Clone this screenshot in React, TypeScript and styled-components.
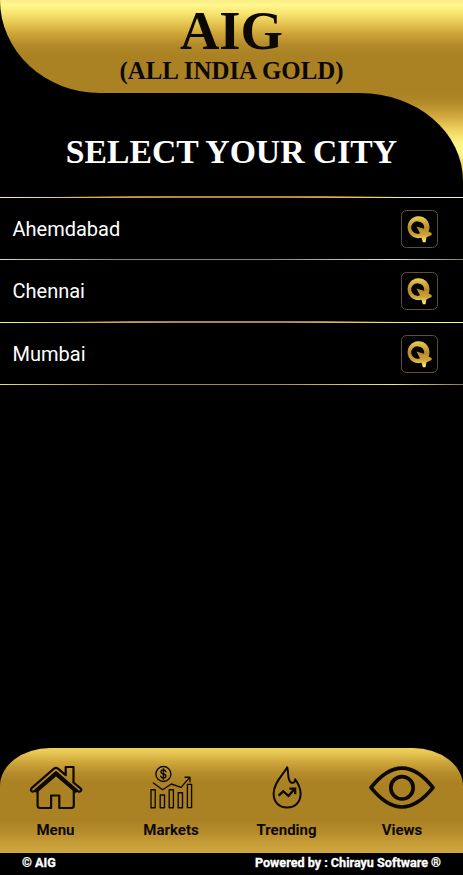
import React from "react";
import styled, { createGlobalStyle } from "styled-components";

const Global = createGlobalStyle`
  * { box-sizing: border-box; }
  body { margin: 0; background: #000; }
`;

const goldSheet =
  "linear-gradient(180deg, #fbee86 0px, #fff78c 5px, #f6e36c 14px, #e2c04c 25px, #cda437 34px, #b38a2a 45px, #ab8223 55px, #ab8223 94px, #b58c2b 104px, #d3aa40 117px, #edd35e 130px, #fff482 143px, #fff78c 152px, #efdc69 164px, #c9a038 186px)";

const Page = styled.div`
  min-height: 100vh;
  display: flex;
  flex-direction: column;
  background: #000;
  color: #fff;
  font-family: Roboto, sans-serif;
  overflow: hidden;
`;

const Header = styled.header`
  height: 93px;
  display: flex;
  flex-direction: column;
  align-items: center;
  background: ${goldSheet} 0 0 / 100% 186px no-repeat;
  border-bottom-left-radius: 100px 93px;
  color: #0c0804;
  font-family: "Liberation Serif", serif;
  font-weight: 700;
`;

const Brand = styled.div`
  font-size: 54.5px;
  line-height: 56px;
  height: 57px;
  padding-top: 3px;
`;

const Tagline = styled.div`
  font-size: 24.9px;
  line-height: 28px;
  white-space: nowrap;
`;

const TitleSheet = styled.div`
  height: 103px;
  background: ${goldSheet} 0 -93px / 100% 186px no-repeat;
`;

const TitlePanel = styled.div`
  height: 103px;
  display: flex;
  justify-content: center;
  background: #000;
  border-top-right-radius: 103px 88px;
`;

const Title = styled.h1`
  margin: 38px 0 0;
  font: 700 33.7px/42px "Liberation Serif", serif;
  white-space: nowrap;
`;

const ThickRule = styled.div<{ $mid: string }>`
  height: 2px;
  background:
    linear-gradient(90deg, transparent 60px, ${(p) => p.$mid} 135px, ${(p) => p.$mid} 325px, transparent 400px) 0 0 / 100% 1px no-repeat,
    linear-gradient(90deg, #fff68a 0, #d9b24e 20%, ${(p) => p.$mid} 40%, ${(p) => p.$mid} 60%, #e8cb5c 78%, #fff68a 88%, #fff68a 100%) 0 1px / 100% 1px no-repeat;
`;

const ThinRule = styled.div<{ $mid: string; $end: string }>`
  height: 1px;
  background: linear-gradient(90deg, #e6dc7c 0, ${(p) => p.$mid} 25%, ${(p) => p.$mid} 58%, #f4e987 85%, ${(p) => p.$end} 100%);
`;

const CityRow = styled.div`
  height: 61px;
  padding: 0 25px 0 12.5px;
  display: flex;
  align-items: center;
  justify-content: space-between;
  font-size: 20px;
`;

const CityName = styled.span`
  line-height: 24px;
`;

const BadgeSvg = styled.svg`
  width: 38px;
  height: 40px;
  display: block;
`;

const Nav = styled.nav`
  margin-top: auto;
  height: 105px;
  display: grid;
  grid-template-columns: repeat(4, 115.5px);
  border-radius: 50px 50px 0 0 / 38px 38px 0 0;
  background: linear-gradient(180deg, #efd35d 0, #e4c250 6px, #cca439 15px, #b58c2b 25px, #ab8223 35px, #ab8223 72px, #b48b2b 83px, #c59b36 94px, #d0a83f 105px);
`;

const NavItem = styled.a`
  display: flex;
  flex-direction: column;
  align-items: center;
  padding: 16px 4.5px 0 0;
  color: #0d0803;
  font-weight: 700;
  font-size: 15px;
  line-height: 18px;
`;

const NavIcon = styled.svg`
  display: block;
  height: 47px;
  margin-bottom: 10px;
  overflow: visible;
  fill: none;
  stroke: #0d0803;
  stroke-linecap: round;
  stroke-linejoin: round;
`;

const Footer = styled.footer`
  height: 22px;
  padding: 0 22px;
  display: flex;
  justify-content: space-between;
  font-size: 12.6px;
  font-weight: 700;
  line-height: 20px;
  -webkit-text-stroke: 0.3px #fff;
`;

function Badge({ id }: { id: string }) {
  return (
    <BadgeSvg viewBox="0 0 38 40">
      <defs>
        <linearGradient id={id} x1="0" y1="0" x2="0" y2="1">
          <stop offset="0" stopColor="#ecd052" />
          <stop offset="0.45" stopColor="#b88a28" />
          <stop offset="0.72" stopColor="#cfa337" />
          <stop offset="1" stopColor="#fff47c" />
        </linearGradient>
      </defs>
      <rect x="1.5" y="1.5" width="36" height="37" rx="5" fill="#000" stroke="#6a5b30" strokeWidth="0.9" />
      <path
        fill={`url(#${id})`}
        fillRule="evenodd"
        d="M18 7.2a10.9 11 0 1 0 3.4 21.6l1.5 4.4h2.6l1-5 5.1-2.3v-1.8l-3-1.5A11 11 0 0 0 18 7.2ZM18 12.4a6.2 6.2 0 0 1 6.1 7.3l-7.7-2.3 3.6 6.8A6.2 6.2 0 1 1 18 12.4Z"
      />
    </BadgeSvg>
  );
}

function HomeIcon() {
  return (
    <NavIcon width="54" viewBox="0 0 54 47" strokeWidth="2.2">
      <path d="M36.7 11.2V3h7.8v15.5l7.1 5.8c1.8 1.7-.6 4.5-2.8 2.8L27 8.2 5.4 27c-2.2 1.7-4.6-1-2.8-2.8L25 4.7q2-1.8 4 0Z" />
      <path d="M8.6 25.5v16q0 2.5 2.5 2.5h11V31.5h8.2V44h12q2.5 0 2.5-2.5v-16" />
      <path strokeWidth="3.4" d="M7.5 27 27 10.2 46.7 27" />
    </NavIcon>
  );
}

function MarketIcon() {
  return (
    <NavIcon width="44" viewBox="0 0 44 47" strokeWidth="1.35">
      <circle cx="14.4" cy="10" r="7.5" />
      <path d="M16.9 7.8Q16.2 6 14.4 6c-3.2 0-3.2 3.5 0 4s3.2 4 0 4q-2 0-2.7-1.8M14.4 4.7v10.6" />
      <path d="m4.4 19 9.2 6.8 8.8-5.8 9.7 3.4 8.5-10M36 13.2h5v4.7" />
      <path d="M2 25.7h4.2v18H2ZM11.2 31h4.3v12.7h-4.3ZM20.2 25.7h4.2v18h-4.2ZM29.2 28.7h4.3v15h-4.3ZM38.4 20.4h4.2v23.3h-4.2Z" />
    </NavIcon>
  );
}

function FlameIcon() {
  return (
    <NavIcon width="30" viewBox="0 0 30 47" strokeWidth="2">
      <path d="M15.2 3.2C12.1 10 1.6 18.3 1.6 29.5c0 8.5 5.3 14 13.5 14s13.5-5.5 13.5-14c0-5.8-2.5-10-5.4-14.2-.2 3-1.8 4.2-4.1 3.2-4-2-2.2-9.4-3.9-15.3Z" />
      <path strokeWidth="2.3" strokeLinecap="butt" strokeLinejoin="miter" d="m6.6 31.7 4.6-4.3 5.3 4.4 6.3-7M17.4 24.6h5.8v5.6" />
    </NavIcon>
  );
}

function EyeIcon() {
  return (
    <NavIcon width="66" viewBox="0 0 66 47" strokeWidth="3.7">
      <path d="M2 23.7C12 11 22 4.2 33 4.2S54 11 64 23.7C54 36 44 43 33 43S12 36 2 23.7Z" />
      <circle cx="33" cy="23.8" r="11.2" />
    </NavIcon>
  );
}

export default function App() {
  return (
    <Page>
      <Global />
      <Header>
        <Brand>AIG</Brand>
        <Tagline>(ALL INDIA GOLD)</Tagline>
      </Header>
      <TitleSheet>
        <TitlePanel>
          <Title>SELECT YOUR CITY</Title>
        </TitlePanel>
      </TitleSheet>
      <main>
        <ThickRule $mid="#b58238" />
        <CityRow>
          <CityName>Ahemdabad</CityName>
          <Badge id="gold-a" />
        </CityRow>
        <ThinRule $mid="#99863a" $end="#8b823f" />
        <CityRow>
          <CityName>Chennai</CityName>
          <Badge id="gold-c" />
        </CityRow>
        <ThickRule $mid="#a78548" />
        <CityRow>
          <CityName>Mumbai</CityName>
          <Badge id="gold-m" />
        </CityRow>
        <ThinRule $mid="#a78548" $end="#8b7846" />
      </main>
      <Nav>
        <NavItem><HomeIcon />Menu</NavItem>
        <NavItem><MarketIcon />Markets</NavItem>
        <NavItem><FlameIcon />Trending</NavItem>
        <NavItem><EyeIcon />Views</NavItem>
      </Nav>
      <Footer>
        <span>© AIG</span>
        <span>Powered by : Chirayu Software ®</span>
      </Footer>
    </Page>
  );
}
